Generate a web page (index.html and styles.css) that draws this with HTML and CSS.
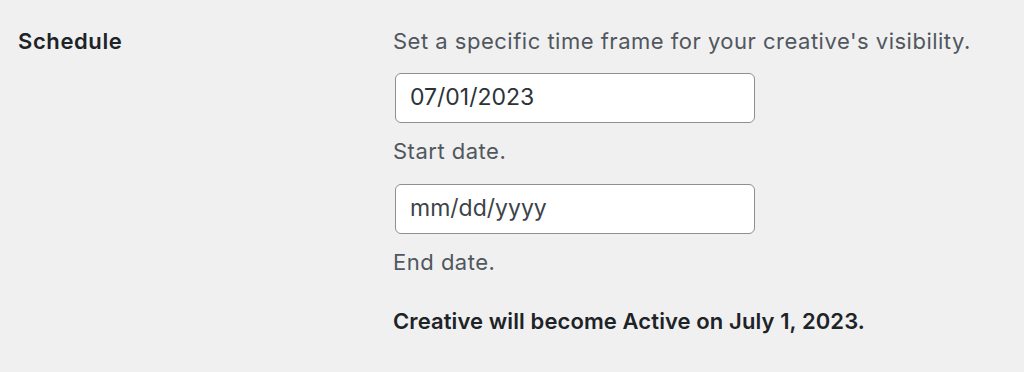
FILE: index.html
```html
<!DOCTYPE html>
<html>
<head>
<meta charset="utf-8">
<link rel="stylesheet" href="styles.css">
</head>
<body>
<div class="row">
  <div class="label">Schedule</div>
  <div class="field">
    <p class="desc first">Set a specific time frame for your creative's visibility.</p>
    <div class="input">07/01/2023</div>
    <p class="desc">Start date.</p>
    <div class="input placeholder">mm/dd/yyyy</div>
    <p class="desc">End date.</p>
    <p class="status">Creative will become Active on July 1, 2023.</p>
  </div>
</div>
</body>
</html>
```
FILE: styles.css
```css
html, body {
  margin: 0;
  padding: 0;
  background: #f0f0f0;
  font-family: Inter, "Liberation Sans", Arial, sans-serif;
  width: 1024px;
  height: 372px;
  overflow: hidden;
}
.row {
  display: flex;
  padding: 27px 0 0 18px;
}
.label {
  width: 375px;
  font-size: 22px;
  letter-spacing: 0.6px;
  font-weight: 600;
  color: #1d2327;
  line-height: 28px;
}
.field {
  display: flex;
  flex-direction: column;
  align-items: flex-start;
}
.desc {
  margin: 0;
  font-size: 22px;
  letter-spacing: 0.5px;
  line-height: 28px;
  color: #50575e;
}
.desc.first {
  margin-bottom: 18px;
}
.input {
  box-sizing: border-box;
  width: 360px;
  height: 50px;
  margin-left: 2px;
  border: 1.5px solid #8c8f94;
  border-radius: 6px;
  background: #fff;
  font-size: 23px;
  color: #2c3338;
  line-height: 47px;
  padding-left: 14px;
  margin-bottom: 14px;
}
.input.placeholder {
  color: #3c434a;
}
.input + .desc {
  margin-bottom: 19px;
}
.status {
  margin: 12px 0 0;
  font-size: 22px;
  letter-spacing: 0.1px;
  line-height: 28px;
  font-weight: 600;
  color: #1d2327;
}
```
